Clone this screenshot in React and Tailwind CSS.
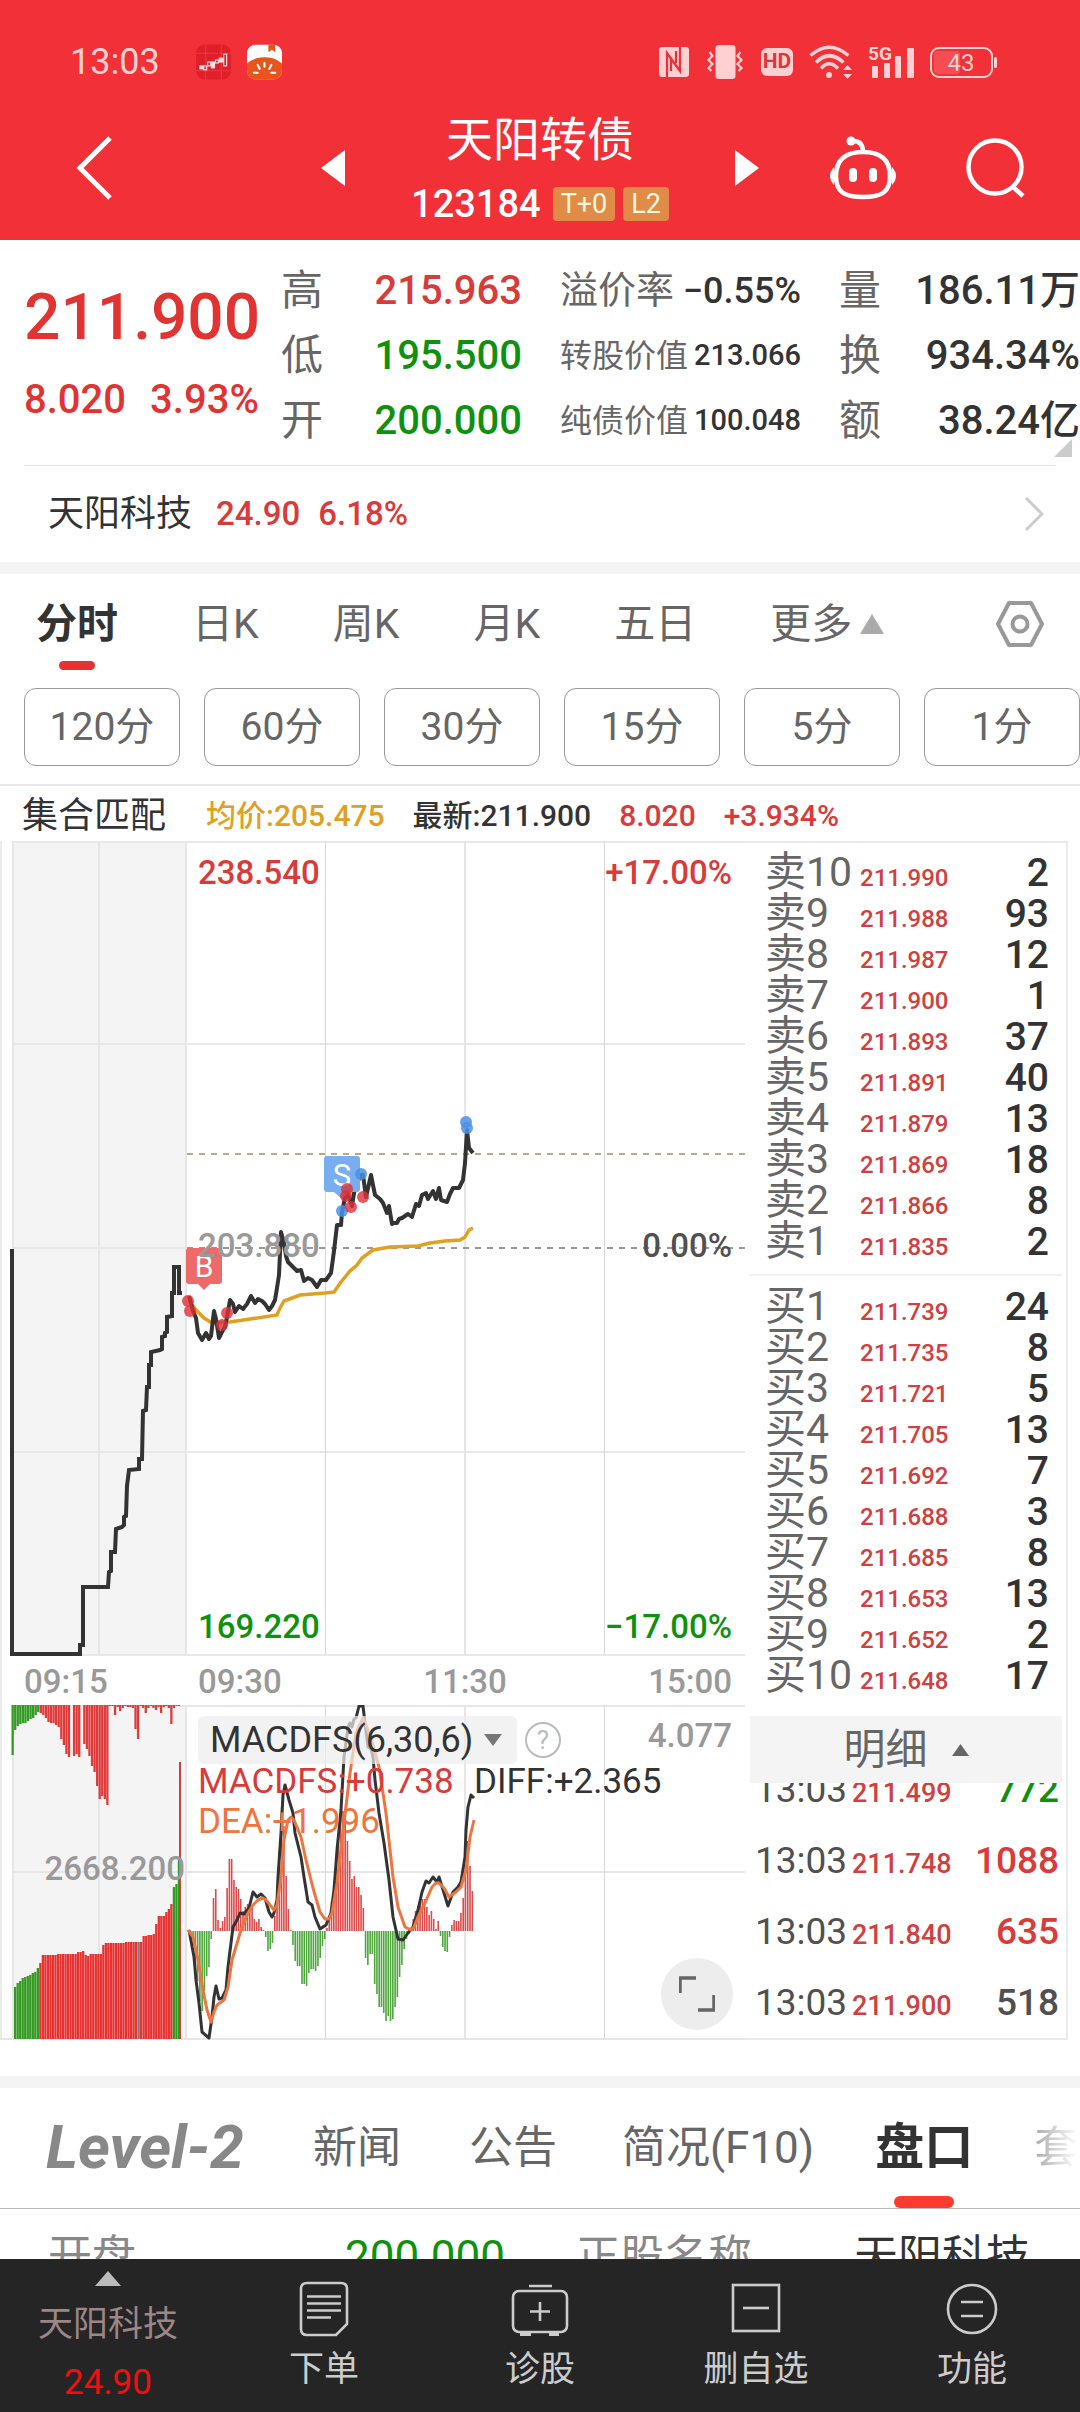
import React from 'react'

const facts = [
  [
    { label: '高', value: '215.963', color: 'text-[#d93a3a]' },
    { label: '低', value: '195.500', color: 'text-[#0f9110]' },
    { label: '开', value: '200.000', color: 'text-[#0f9110]' }
  ],
  [
    { label: '溢价率', value: '−0.55%', size: 'text-[36px]', labelSize: 'text-[38px]' },
    { label: '转股价值', value: '213.066', size: 'text-[29px]', labelSize: 'text-[32px]' },
    { label: '纯债价值', value: '100.048', size: 'text-[29px]', labelSize: 'text-[32px]' }
  ],
  [
    { label: '量', value: '186.11万' },
    { label: '换', value: '934.34%' },
    { label: '额', value: '38.24亿' }
  ]
]

const periods = ['分时', '日K', '周K', '月K', '五日']
const minutes = ['120分', '60分', '30分', '15分', '5分', '1分']

const sells = [
  ['卖10', '211.990', 2],
  ['卖9', '211.988', 93],
  ['卖8', '211.987', 12],
  ['卖7', '211.900', 1],
  ['卖6', '211.893', 37],
  ['卖5', '211.891', 40],
  ['卖4', '211.879', 13],
  ['卖3', '211.869', 18],
  ['卖2', '211.866', 8],
  ['卖1', '211.835', 2]
]

const buys = [
  ['买1', '211.739', 24],
  ['买2', '211.735', 8],
  ['买3', '211.721', 5],
  ['买4', '211.705', 13],
  ['买5', '211.692', 7],
  ['买6', '211.688', 3],
  ['买7', '211.685', 8],
  ['买8', '211.653', 13],
  ['买9', '211.652', 2],
  ['买10', '211.648', 17]
]

const trades = [
  { time: '13:03', price: '211.499', volume: 772, color: 'text-[#0f9110]' },
  { time: '13:03', price: '211.748', volume: 1088, color: 'text-[#d93a3a]' },
  { time: '13:03', price: '211.840', volume: 635, color: 'text-[#d93a3a]' },
  { time: '13:03', price: '211.900', volume: 518, color: 'text-[#505050]' }
]

// Chart series, in chart units
const auctionLine =
  '12,408 12,813 80,813 80,804 83,804 83,746 108,746 109,731 111,730 111,711 115,711 116,688 122,686 124,684 124,676 126,675 127,645 129,629 139,628 139,618 142,618 143,570 146,569 147,546 149,546 149,524 151,524 151,511 160,509 162,508 162,496 165,495 165,492 167,491 167,476 172,475 172,452 174,452 174,426 179,426 179,452 182,452'

const priceLine =
  '189,455 193,470 196,477 198,492 202,499 206,492 209,498 211,495 214,470 216,478 219,497 223,489 225,486 227,476 230,459 233,463 235,471 239,465 243,468 247,463 251,455 255,462 258,458 262,460 265,463 269,469 272,465 275,459 277,447 279,434 281,391 284,402 286,415 288,421 292,425 297,430 301,429 304,440 308,437 312,439 317,446 321,439 326,439 331,432 334,410 337,384 341,384 342,371 346,352 349,356 352,365 355,346 361,334 363,334 366,356 371,334 375,354 380,358 383,362 387,372 389,365 392,383 394,382 397,382 399,378 402,377 408,373 412,376 416,363 419,365 422,354 426,352 428,358 433,350 436,358 439,347 441,359 447,361 450,353 453,347 459,347 463,339 465,322 467,289 469,307 473,312'

const averageLine =
  '189,459 196,469 204,477 212,482 230,481 250,478 277,474 280,467 284,460 300,454 325,452 334,451 341,441 350,430 357,424 362,417 373,409 390,406 418,405 430,402 445,400 460,399 465,396 469,389 473,387'

const sellDots = [[361, 333], [342, 370], [466, 281], [467, 287]]
const buyDots = [[188, 460], [190, 470], [222, 484], [227, 472], [347, 348], [346, 355], [351, 366], [363, 356]]

const diffLine =
  '189,225 194,252 196,275 199,298 202,327 209,333 212,312 214,292 216,281 219,294 222,293 226,285 228,262 231,238 233,222 237,215 240,208 244,209 249,203 253,187 257,192 261,189 265,193 269,207 272,212 274,208 277,195 278,172 281,128 283,90 285,80 289,95 293,108 295,128 301,152 304,172 308,197 312,200 315,212 320,224 326,220 331,208 334,185 337,145 341,105 344,52 348,22 350,18 352,22 354,14 356,13 359,1 363,1 365,18 368,42 371,44 373,52 375,75 379,108 384,138 389,175 393,212 398,234 403,235 408,228 413,222 418,205 422,187 426,176 429,178 433,172 437,177 439,172 444,188 448,201 453,187 458,182 461,177 465,152 466,125 468,102 471,90 474,93'

const deaLine =
  '188,225 193,232 198,255 203,285 207,305 211,317 214,307 217,300 224,295 228,282 232,255 241,225 248,208 253,200 258,195 263,193 266,195 270,200 274,205 277,200 281,172 284,135 288,115 291,112 294,115 301,132 306,155 313,183 320,207 325,214 329,214 332,208 337,178 344,118 350,68 356,28 363,13 370,30 379,62 386,108 393,172 398,202 405,222 411,225 414,222 418,212 425,198 432,182 436,178 439,178 444,183 449,192 456,187 461,182 466,165 470,132 474,115'

const macdBars = [
  -5, -15, -35, -50, -70, -80, -60, -45, -36, -8, 33, 42, 11, 3, 10, 14, 43, 72, 72, 51, 44, 42, 32, 20, 24,
  27, 27, 24, 12, 9, 12, 4, 1, -6, -20, -18, -12, 15, 45, 80, 124, 105, 55, 22, 1, -14, -30, -35, -35, -53,
  -53, -55, -42, -38, -38, -40, -35, -27, -15, -8, 3, 12, 30, 50, 75, 95, 115, 120, 115, 90, 70, 52, 55, 44,
  44, 36, 23, -27, -34, -23, -23, -53, -63, -76, -76, -82, -90, -85, -90, -88, -76, -66, -46, -34, -18, -8,
  -3, 2, 12, 20, 25, 30, 32, 32, 24, 16, 20, 12, 2, 10, -5, -16, -20, -21, -6, 6, 11, 10, 10, 18, 33, 60,
  90, 65, 40
]

const matchedBars = [
  52, 56, 58, 61, 62, 63, 64, 66, 67, 71, 76, 84, 84, 84, 84, 84, 84, 85, 85, 85, 85, 85, 85, 85, 85, 87, 87,
  88, 84, 83, 85, 85, 85, 85, 85, 94, 96, 96, 96, 96, 96, 96, 96, 96, 97, 97, 97, 97, 97, 97, 97, 103, 103,
  104, 104, 105, 115, 123, 123, 123, 127, 130, 135, 152, 155, 180
]

const unmatchedBars = [
  50, 25, 21, 19, 18, 18, 16, 14, 13, 10, 7, 8, 10, 13, 17, 18, 18, 20, 22, 34, 40, 49, 52, 0, 51, 49, 52, 0,
  39, 44, 51, 61, 67, 81, 94, 91, 94, 100, 1, 1, 10, 2, 6, 3, 1, 2, 2, 3, 24, 34, 1, 3, 8, 3, 1, 3, 5, 2,
  8, 2, 1, 3, 19, 3, 1, 1
]

function StatusBar() {
  return (
    <div className="flex h-11 items-center pl-[70px] pr-[83px] text-[#ffd0d2]">
      <span className="text-[36px]">13:03</span>
      <svg className="ml-9 h-9 w-[35px]" viewBox="0 0 36 36">
        <rect width="36" height="36" rx="9" fill="#e01f2a" />
        <path d="M0 9H36M0 27H36M10 0V36M26 0V36" stroke="#ee4a50" strokeWidth="0.7" />
        <g fill="none" stroke="#ffdfe0" strokeWidth="1.2">
          <rect x="4" y="22" width="3" height="3" fill="#ffdfe0" />
          <rect x="8" y="22" width="3" height="4" />
          <rect x="12" y="18" width="3" height="4" />
          <rect x="16" y="18" width="3" height="6" fill="#ffdfe0" />
          <rect x="20" y="16" width="3" height="3" />
          <rect x="24" y="14" width="3" height="4" fill="#ffdfe0" />
          <rect x="28.500" y="10" width="3" height="12" />
        </g>
      </svg>
      <svg className="ml-4 h-9 w-[35px]" viewBox="0 0 36 36">
        <defs>
          <clipPath id="bookIcon">
            <rect width="36" height="36" rx="9" />
          </clipPath>
        </defs>
        <g clipPath="url(#bookIcon)">
          <rect width="36" height="36" fill="#fff" />
          <path d="M22 0H29V8L25.500 5.500L22 8Z" fill="#e0551c" />
          <ellipse cx="18" cy="29" rx="22" ry="16" fill="#e8541a" />
          <path d="M18 19V23M11 21L13 25M25 21L23 25M7 29H11M29 29H25" stroke="#fff" strokeWidth="2.200" strokeLinecap="round" />
        </g>
      </svg>

      <div className="ml-auto flex items-center gap-4">
        {/* NFC */}
        <svg className="h-[30px] w-[30px]" viewBox="0 0 30 30">
          <rect width="30" height="30" rx="3" fill="currentColor" />
          <path d="M8 30V6L21 24V0M12 11V24M17 4V16" fill="none" stroke="#ef2f37" strokeWidth="2.200" />
        </svg>
        {/* Vibrate */}
        <svg className="h-[34px] w-10" viewBox="0 0 35 34" fill="none" stroke="currentColor" strokeWidth="2.200">
          <rect x="8" width="20" height="34" rx="3" fill="currentColor" stroke="none" />
          <path d="M2 7L5 11L1 15L5 19L1 23L4 26M33 7L30 11L34 15L30 19L34 23L31 26" />
        </svg>
        <span className="flex h-7 w-8 items-center justify-center rounded-md bg-[#ffd0d2] text-[21px] font-bold text-[#e0353b]">
          HD
        </span>
        {/* Wi-Fi */}
        <svg className="h-[34px] w-[43px]" viewBox="0 0 43 34" fill="none" stroke="currentColor" strokeWidth="3.600">
          <path d="M1.500 10.500Q20 -6 39.500 10.500M7 17.500Q20 4 34.500 17.500M12 23.500Q20 14 29 23.500" />
          <circle cx="20" cy="30" r="3" fill="currentColor" stroke="none" />
          <path d="M34 25L38.500 20L43 25ZM34 29L38.500 34L43 29Z" fill="currentColor" stroke="none" />
        </svg>
        {/* Mobile signal */}
        <svg className="h-9 w-[46px] overflow-visible" viewBox="0 -2 46 36" fill="currentColor">
          <text x="0" y="14" fontSize="19" fontWeight="700">5G</text>
          <rect x="4" y="20" width="6" height="12" rx="1" />
          <rect x="16" y="17" width="6" height="15" rx="1" />
          <rect x="27" y="10" width="6" height="22" rx="1" />
          <rect x="39" y="2" width="7" height="30" rx="1" />
        </svg>
        {/* Battery */}
        <svg className="h-[31px] w-[67px]" viewBox="0 0 67 31">
          <rect x="4" y="4" width="26" height="23" rx="4" fill="#f54d54" />
          <rect x="1" y="1" width="61" height="29" rx="8" fill="none" stroke="currentColor" strokeWidth="2" />
          <rect x="64" y="10" width="3" height="11" rx="1.500" fill="currentColor" />
          <text x="31" y="24" textAnchor="middle" fontSize="24" fill="currentColor">43</text>
        </svg>
      </div>
    </div>
  )
}

function Header() {
  return (
    <header className="bg-[#f23037] pt-10 pb-4 text-white">
      <StatusBar />
      <div className="mt-7 grid grid-cols-[1fr_390px_1fr] items-center">
        <div className="flex items-center justify-between pl-[76px]">
          <button aria-label="返回">
            <svg className="block h-16 w-9" viewBox="0 0 36 64" fill="none" stroke="currentColor" strokeWidth="5">
              <path d="M34 2L4 32L34 62" />
            </svg>
          </button>
          <button aria-label="上一只">
            <svg className="block h-9 w-6" viewBox="0 0 24 36" fill="currentColor">
              <path d="M24 0V36L0 18Z" />
            </svg>
          </button>
        </div>
        <div className="flex flex-col items-center">
          <h1 className="text-[47px] leading-[56px]">天阳转债</h1>
          <div className="mt-4 flex h-10 items-center gap-2">
            <span className="mr-1 text-[38px] font-medium">123184</span>
            <span className="rounded-sm bg-[#e08c48] px-2 text-[27px] leading-[34px] text-[#fff8dc]">T+0</span>
            <span className="rounded-sm bg-[#e08c48] px-2 text-[27px] leading-[34px] text-[#fff8dc]">L2</span>
          </div>
        </div>
        <div className="flex items-center justify-between pr-[54px]">
          <button aria-label="下一只">
            <svg className="block h-9 w-6" viewBox="0 0 24 36" fill="currentColor">
              <path d="M0 0V36L24 18Z" />
            </svg>
          </button>
          <button aria-label="智能助手">
            <svg className="block h-16 w-[70px]" viewBox="0 0 70 64" fill="none" stroke="currentColor" strokeWidth="4.500">
              <path d="M35 16C53 16 62 24 62 40C62 56 54 61 35 61C16 61 8 56 8 40C8 24 17 16 35 16Z" />
              <path d="M35 16C35 8 31 5 25 5" />
              <circle cx="23" cy="5" r="4.500" fill="currentColor" stroke="none" />
              <path d="M6 31Q-2 40 6 49ZM64 31Q72 40 64 49Z" fill="currentColor" stroke="none" />
              <rect x="21" y="32" width="8" height="14" rx="4" fill="currentColor" stroke="none" />
              <rect x="41" y="32" width="8" height="14" rx="4" fill="currentColor" stroke="none" />
            </svg>
          </button>
          <button aria-label="搜索">
            <svg className="block h-[60px] w-[60px]" viewBox="0 0 60 60" fill="none" stroke="currentColor" strokeWidth="4.500">
              <circle cx="29" cy="29" r="26.500" />
              <path d="M46 48L57 58" />
            </svg>
          </button>
        </div>
      </div>
    </header>
  )
}

function Quote() {
  return (
    <section className="relative flex gap-[38px] pt-[18px] pb-3 pl-6 whitespace-nowrap">
      <div className="w-[219px] pt-5 font-medium text-[#e23333]">
        <div className="text-[64px] leading-[80px]">211.900</div>
        <div className="mt-[22px] flex gap-6 text-[40px] leading-[40px]">
          <span>8.020</span>
          <span>3.93%</span>
        </div>
      </div>
      {facts.map((column, i) => (
        <dl key={i} className="flex-1">
          {column.map((fact) => (
            <div key={fact.label} className="flex h-[65px] items-center justify-between">
              <dt className={`text-[#666] ${fact.labelSize || 'text-[42px]'}`}>{fact.label}</dt>
              <dd className={`font-medium ${fact.color || 'text-[#333]'} ${fact.size || 'text-[40px]'}`}>{fact.value}</dd>
            </div>
          ))}
        </dl>
      ))}
      <svg className="absolute right-2 bottom-2 h-[18px] w-[18px]" viewBox="0 0 18 18">
        <path d="M18 0V18H0Z" fill="#ccc" />
      </svg>
    </section>
  )
}

function PeriodTabs() {
  return (
    <div>
      <nav className="flex items-center gap-[74px] pr-9 pl-9 pt-4 text-[41px] text-[#666]">
        {periods.map((name, i) => (
          <button key={name} className={`relative pb-5 leading-[68px] ${i === 0 ? 'font-bold text-[#333]' : ''}`}>
            {name}
            {i === 0 && <span className="absolute bottom-2 left-1/2 h-[9px] w-9 -translate-x-1/2 rounded-full bg-[#e83232]" />}
          </button>
        ))}
        <button className="flex items-center gap-2 pb-5 leading-[68px]">
          更多
          <svg className="h-5 w-6" viewBox="0 0 24 20">
            <path d="M12 0L24 20H0Z" fill="#aaa" />
          </svg>
        </button>
        <button className="ml-auto pb-5" aria-label="设置">
          <svg className="block h-12 w-12" viewBox="0 0 48 48" fill="none" stroke="#999" strokeWidth="4" strokeLinejoin="round">
            <path d="M13 3H35L46 24L35 45H13L2 24Z" />
            <circle cx="24" cy="24" r="7.500" />
          </svg>
        </button>
      </nav>
      <div className="mt-[10px] flex gap-6 pb-[18px] pl-6">
        {minutes.map((name) => (
          <button key={name} className="h-[78px] flex-1 rounded-xl border border-[#999] text-[39px] text-[#666]">
            {name}
          </button>
        ))}
      </div>
    </div>
  )
}

function PriceChart() {
  return (
    <svg className="block w-full" viewBox="0 0 745 864">
      <rect x="12" y="0" width="175" height="814" fill="#f4f4f4" />
      <path d="M12 1H745M12 203H745M12 611H745M12 407H187M12 814H745" stroke="#e8e8e8" strokeWidth="2" fill="none" />
      <path d="M13 0V814M99 0V814M186 0V814M465 0V814" stroke="#e6e6e6" strokeWidth="2" fill="none" />
      <path d="M325.500 0V814M604.500 0V814" stroke="#d8d8d8" fill="none" />
      <path d="M187 313H745" stroke="#bfa878" strokeWidth="1.800" strokeDasharray="6 6" />
      <path d="M187 407H745" stroke="#999" strokeWidth="1.800" strokeDasharray="6 6" />

      <polyline points={auctionLine} fill="none" stroke="#333" strokeWidth="4" />
      <polyline points={averageLine} fill="none" stroke="#e0a020" strokeWidth="3.500" />
      <polyline points={priceLine} fill="none" stroke="#333" strokeWidth="4" strokeLinejoin="round" />

      {/* Trade markers */}
      <path d="M189 407H219Q222 407 222 410V440Q222 443 219 443H210L204 449L198 443H189Q186 443 186 440V410Q186 407 189 407Z" fill="#ee6a6a" />
      <text x="204" y="436" textAnchor="middle" fontSize="30" fill="#fff">B</text>
      <path d="M327 315H357Q360 315 360 318V348Q360 351 357 351H348L342 358L334 351H327Q324 351 324 348V318Q324 315 327 315Z" fill="#78aef0" />
      <text x="342" y="345" textAnchor="middle" fontSize="31" fill="#fff">S</text>
      {sellDots.map(([x, y]) => (
        <circle key={`${x}-${y}`} cx={x} cy={y} r="6" fill="#4a90e8" fillOpacity="0.85" />
      ))}
      {buyDots.map(([x, y]) => (
        <circle key={`${x}-${y}`} cx={x} cy={y} r="6" fill="#e03038" fillOpacity="0.8" />
      ))}

      {/* Axis labels */}
      <g fontSize="33" fontWeight="500">
        <text x="198" y="43" fill="#d93a3a">238.540</text>
        <text x="732" y="43" textAnchor="end" fill="#d93a3a">+17.00%</text>
        <text x="198" y="416" fill="#999">203.880</text>
        <text x="732" y="416" textAnchor="end" fill="#505050">0.00%</text>
        <text x="198" y="797" fill="#0f9110">169.220</text>
        <text x="732" y="797" textAnchor="end" fill="#0f9110">−17.00%</text>
      </g>
      <g fontSize="33" fontWeight="500" fill="#999">
        <text x="24" y="852">09:15</text>
        <text x="198" y="852">09:30</text>
        <text x="465" y="852" textAnchor="middle">11:30</text>
        <text x="732" y="852" textAnchor="end">15:00</text>
      </g>
    </svg>
  )
}

function auctionColor(i) {
  if (i < 10) return '#339a22'
  if (i === 49) return '#777'
  if (i > 62) return '#339a22'
  return '#e83232'
}

function MacdChart() {
  return (
    <div className="relative">
      <svg className="block w-full" viewBox="0 0 745 335">
        <rect x="12" y="0" width="175" height="334" fill="#f4f4f4" />
        <path d="M12 1H745M12 167H745M0 334H745M13 0V334M99 0V334M186 0V334M465 0V334" stroke="#e6e6e6" strokeWidth="2" fill="none" />
        <path d="M325.500 0V334M604.500 0V334" stroke="#d8d8d8" fill="none" />

        {matchedBars.map((h, i) => (
          <rect key={i} x={14 + i * 2.52} y={334 - h} width="2.300" height={h} fill={auctionColor(i)} />
        ))}
        {unmatchedBars.map((h, i) => (
          <rect key={i} x={11.500 + i * 2.56} y="0" width="2.300" height={h} fill={i > 10 && i < 64 ? '#e03a3a' : '#339a22'} />
        ))}
        <rect x="179" y="57" width="2" height="277" fill="#c84040" />

        {macdBars.map((v, i) => (
          <rect
            key={i}
            x={190 + i * 2.27}
            y={v > 0 ? 226 - v : 226}
            width="1.600"
            height={Math.abs(v)}
            fill={v > 0 ? '#dc4a4a' : '#4ea63c'}
          />
        ))}
        <polyline points={diffLine} fill="none" stroke="#333" strokeWidth="3" strokeLinejoin="round" />
        <polyline points={deaLine} fill="none" stroke="#ee7440" strokeWidth="3" strokeLinejoin="round" />

        <text x="185" y="175" textAnchor="end" fontSize="33" fontWeight="500" fill="#999">2668.200</text>
        <text x="732" y="42" textAnchor="end" fontSize="33" fontWeight="500" fill="#999">4.077</text>
        <g fontSize="35">
          <text x="198" y="88" fill="#d93a3a">MACDFS:+0.738</text>
          <text x="474" y="88" fill="#333">DIFF:+2.365</text>
          <text x="198" y="128" fill="#ee7440">DEA:+1.996</text>
        </g>
      </svg>
      <div className="absolute top-[11px] left-[198px] flex items-center gap-2">
        <button className="flex h-12 w-[319px] items-center justify-between rounded-md bg-[#ededed]/70 pr-[15px] pl-3 text-[36px] text-[#333]">
          MACDFS(6,30,6)
          <svg className="h-3 w-[18px]" viewBox="0 0 18 12">
            <path d="M0 0H18L9 12Z" fill="#777" />
          </svg>
        </button>
        <button className="h-9 w-9 rounded-full border-2 border-[#bbb] text-[26px] leading-8 text-[#bbb]" aria-label="指标说明">
          ?
        </button>
      </div>
      <button className="absolute right-3 bottom-[10px] rounded-full bg-[#ededed] p-[18px]" aria-label="全屏">
        <svg className="block h-9 w-9" viewBox="0 0 36 36" fill="none" stroke="#666" strokeWidth="3.500">
          <path d="M1 17V2H17M35 19V34H19" />
        </svg>
      </button>
    </div>
  )
}

function DepthRows({ rows }) {
  return (
    <table className="w-full">
      <tbody>
        {rows.map(([label, price, count]) => (
          <tr key={label} className="align-baseline">
            <th className="w-[95px] text-left text-[41px] leading-[41px] font-normal text-[#666]">{label}</th>
            <td className="text-[24px] leading-none font-medium text-[#d04040]">{price}</td>
            <td className="text-right text-[39px] leading-none font-medium text-[#333]">{count}</td>
          </tr>
        ))}
      </tbody>
    </table>
  )
}

function OrderBook() {
  return (
    <div className="w-[323px] shrink-0 border-t-2 border-r-2 border-b-2 border-[#ebebeb]">
      <div className="pt-[9px] pr-[17px] pl-5">
        <DepthRows rows={sells} />
      </div>
      <div className="mx-1 mt-3 mb-[10px] h-[2px] bg-[#f2f2f2]" />
      <div className="pr-[17px] pl-5">
        <DepthRows rows={buys} />
      </div>
      <div className="mt-5 pr-1 pl-[5px]">
        <button className="flex h-[67px] w-full items-center justify-center gap-6 bg-[#f4f4f4] text-[42px] text-[#666]">
          明细
          <svg className="h-3 w-[17px]" viewBox="0 0 17 12">
            <path d="M8.500 0L17 12H0Z" fill="#666" />
          </svg>
        </button>
      </div>
      <div className="flex h-[255px] items-end overflow-hidden pr-[7px] pl-[10px]">
        <table className="w-full">
          <tbody>
            {trades.map((trade) => (
              <tr key={trade.price} className="align-baseline">
                <td className="w-[97px] text-[37px] leading-[71px] text-[#505050]">{trade.time}</td>
                <td className="text-[27px] leading-none font-medium text-[#d04040]">{trade.price}</td>
                <td className={`text-right text-[37px] leading-none font-medium ${trade.color}`}>{trade.volume}</td>
              </tr>
            ))}
          </tbody>
        </table>
      </div>
    </div>
  )
}

function InfoTabs() {
  return (
    <section className="overflow-hidden">
      <nav className="flex h-[121px] items-center border-b border-[#bbb] pl-[46px] text-[44px] whitespace-nowrap text-[#666]">
        <button className="text-[61px] font-bold text-[#888] italic">Level-2</button>
        <button className="ml-[69px]">新闻</button>
        <button className="ml-[68px]">公告</button>
        <button className="ml-[65px]">简况(F10)</button>
        <button className="relative ml-[61px] text-[49px] leading-[120px] font-bold text-[#333]">
          盘口
          <span className="absolute bottom-0 left-1/2 h-3 w-[60px] -translate-x-1/2 rounded-full bg-[#ff3b30]" />
        </button>
        <button className="ml-[61px] bg-linear-to-r from-[#aaa] to-white bg-clip-text text-transparent">套</button>
      </nav>
      <dl className="flex pt-[18px] pr-[50px] pl-12 text-[44px] leading-[60px] whitespace-nowrap">
        <dt className="w-[222px] text-[#888]">开盘</dt>
        <dd className="w-[235px] text-right text-[#0f9110]">200.000</dd>
        <dt className="ml-[71px] text-[#888]">正股名称</dt>
        <dd className="ml-auto text-[#333]">天阳科技</dd>
      </dl>
    </section>
  )
}

function BottomBar() {
  return (
    <footer className="grid h-[153px] shrink-0 grid-cols-5 bg-[#252525] text-[35px] text-[#ccc]">
      <button className="flex flex-col items-center pt-3">
        <svg className="h-[15px] w-[26px]" viewBox="0 0 26 15">
          <path d="M13 0L26 15H0Z" fill="#bbb" />
        </svg>
        <span className="mt-[14px] leading-[50px] text-[#9c8686]">天阳科技</span>
        <span className="leading-[66px] text-[#f01010]">24.90</span>
      </button>
      <button className="flex flex-col items-center pt-[22px]">
        <svg className="h-14 w-[50px]" viewBox="0 0 50 56" fill="none" stroke="currentColor" strokeWidth="2.600">
          <path d="M8 2H42Q48 2 48 8V43L37 54H8Q2 54 2 48V8Q2 2 8 2Z" />
          <path d="M8 15.500H42M8 22.500H42M8 29.500H42M8 36.500H32" />
        </svg>
        <span className="mt-2 leading-[50px]">下单</span>
      </button>
      <button className="flex flex-col items-center pt-[22px]">
        <svg className="h-14 w-[58px]" viewBox="0 0 58 56" fill="none" stroke="currentColor" strokeWidth="2.600">
          <rect x="2" y="10" width="54" height="41" rx="6" />
          <path d="M18 5H41M29 21V40M19 30.500H39" />
          <path d="M9 53H20M38 53H48" strokeWidth="4" />
        </svg>
        <span className="mt-2 leading-[50px]">诊股</span>
      </button>
      <button className="flex flex-col items-center pt-[22px]">
        <svg className="h-14 w-[50px]" viewBox="0 0 50 56" fill="none" stroke="currentColor" strokeWidth="2.600">
          <rect x="2" y="4" width="46" height="46" />
          <path d="M12 27H38" />
        </svg>
        <span className="mt-2 leading-[50px]">删自选</span>
      </button>
      <button className="flex flex-col items-center pt-[22px]">
        <svg className="h-14 w-[52px]" viewBox="0 0 52 56" fill="none" stroke="currentColor" strokeWidth="2.600">
          <circle cx="26" cy="28" r="24" />
          <path d="M15 21H37M15 35H37" />
        </svg>
        <span className="mt-2 leading-[50px]">功能</span>
      </button>
    </footer>
  )
}

export default function App() {
  return (
    <div className="flex h-screen flex-col bg-white font-['Roboto','Noto_Sans_CJK_SC',sans-serif]">
      <main className="flex-1 overflow-hidden">
        <Header />
        <Quote />
        <a href="#stock" className="relative flex h-[97px] items-center px-12 text-[33px] font-medium text-[#d93a3a]">
          <span className="absolute inset-x-6 top-0 h-px bg-[#e0e0e0]" />
          <span className="mr-6 text-[36px] font-normal text-[#333]">天阳科技</span>
          <span className="mr-[18px]">24.90</span>
          <span>6.18%</span>
          <svg className="-mr-3 ml-auto h-9 w-5" viewBox="0 0 20 36" fill="none" stroke="#ccc" strokeWidth="3">
            <path d="M2 2L18 18L2 34" />
          </svg>
        </a>
        <div className="h-3 bg-[#f4f4f4]" />
        <PeriodTabs />

        <div className="flex h-[57px] items-center gap-7 border-t-2 border-[#e8e8e8] pt-1 pl-[22px] text-[30px] font-medium whitespace-nowrap">
          <span className="mr-3 text-[36px] font-normal text-[#333]">集合匹配</span>
          <span className="text-[#e0a020]">均价:205.475</span>
          <span className="text-[#333]">最新:211.900</span>
          <span className="text-[#d93a3a]">8.020</span>
          <span className="text-[#d93a3a]">+3.934%</span>
        </div>

        <section className="flex pr-3">
          <div className="min-w-0 flex-1 border-l-2 border-[#ebebeb]">
            <div className="-ml-[2px]">
              <PriceChart />
              <MacdChart />
            </div>
          </div>
          <OrderBook />
        </section>

        <div className="mt-9 h-3 bg-[#f4f4f4]" />
        <InfoTabs />
      </main>
      <BottomBar />
    </div>
  )
}
